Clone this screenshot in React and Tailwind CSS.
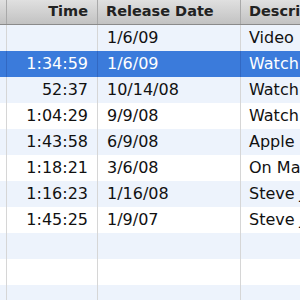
export default function App() {
  const rows = [
    ["", "1/6/09", "Video"],
    ["1:34:59", "1/6/09", "Watch"],
    ["52:37", "10/14/08", "Watch"],
    ["1:04:29", "9/9/08", "Watch"],
    ["1:43:58", "6/9/08", "Apple"],
    ["1:18:21", "3/6/08", "On Ma"],
    ["1:16:23", "1/16/08", "Steve J"],
    ["1:45:25", "1/9/07", "Steve J"],
    ["", "", ""],
    ["", "", ""],
    ["", "", ""],
  ];
  const font = { fontFamily: '"DejaVu Sans", Verdana, sans-serif' };
  return (
    <div className="w-[300px] h-[300px] overflow-hidden bg-white text-[16px] text-[#111]" style={font}>
      <div className="flex h-[25px] border-b border-[#8a8a8a] bg-gradient-to-b from-[#e0e0e0] to-[#c2c2c2] font-bold text-[14.5px] text-[#222] whitespace-nowrap">
        <div className="w-[7px] shrink-0 border-r border-[#a9a9a9]"></div>
        <div className="w-[91px] shrink-0 border-r border-[#a9a9a9] flex items-center justify-end pr-[9px]">Time</div>
        <div className="w-[143px] shrink-0 border-r border-[#a9a9a9] flex items-center pl-[8px]">Release Date</div>
        <div className="flex-1 flex items-center pl-[8px] overflow-hidden">Description</div>
      </div>
      {rows.map((r, i) => {
        const sel = i === 1;
        const bg = sel ? "bg-[#3b7bdb] text-white" : i % 2 === 0 ? "bg-[#edf3fc]" : "bg-white";
        const line = sel ? "border-[#3268c2]" : "border-[#d6d6d6]";
        return (
          <div key={i} className={`flex h-[26px] whitespace-nowrap ${bg}`}>
            <div className={`w-[7px] shrink-0 border-r ${line}`}></div>
            <div className={`w-[91px] shrink-0 border-r ${line} flex items-center justify-end pr-[9px]`}>{r[0]}</div>
            <div className={`w-[143px] shrink-0 border-r ${line} flex items-center pl-[9px]`}>{r[1]}</div>
            <div className="flex-1 flex items-center pl-[8px] overflow-hidden">{r[2]}</div>
          </div>
        );
      })}
    </div>
  );
}
